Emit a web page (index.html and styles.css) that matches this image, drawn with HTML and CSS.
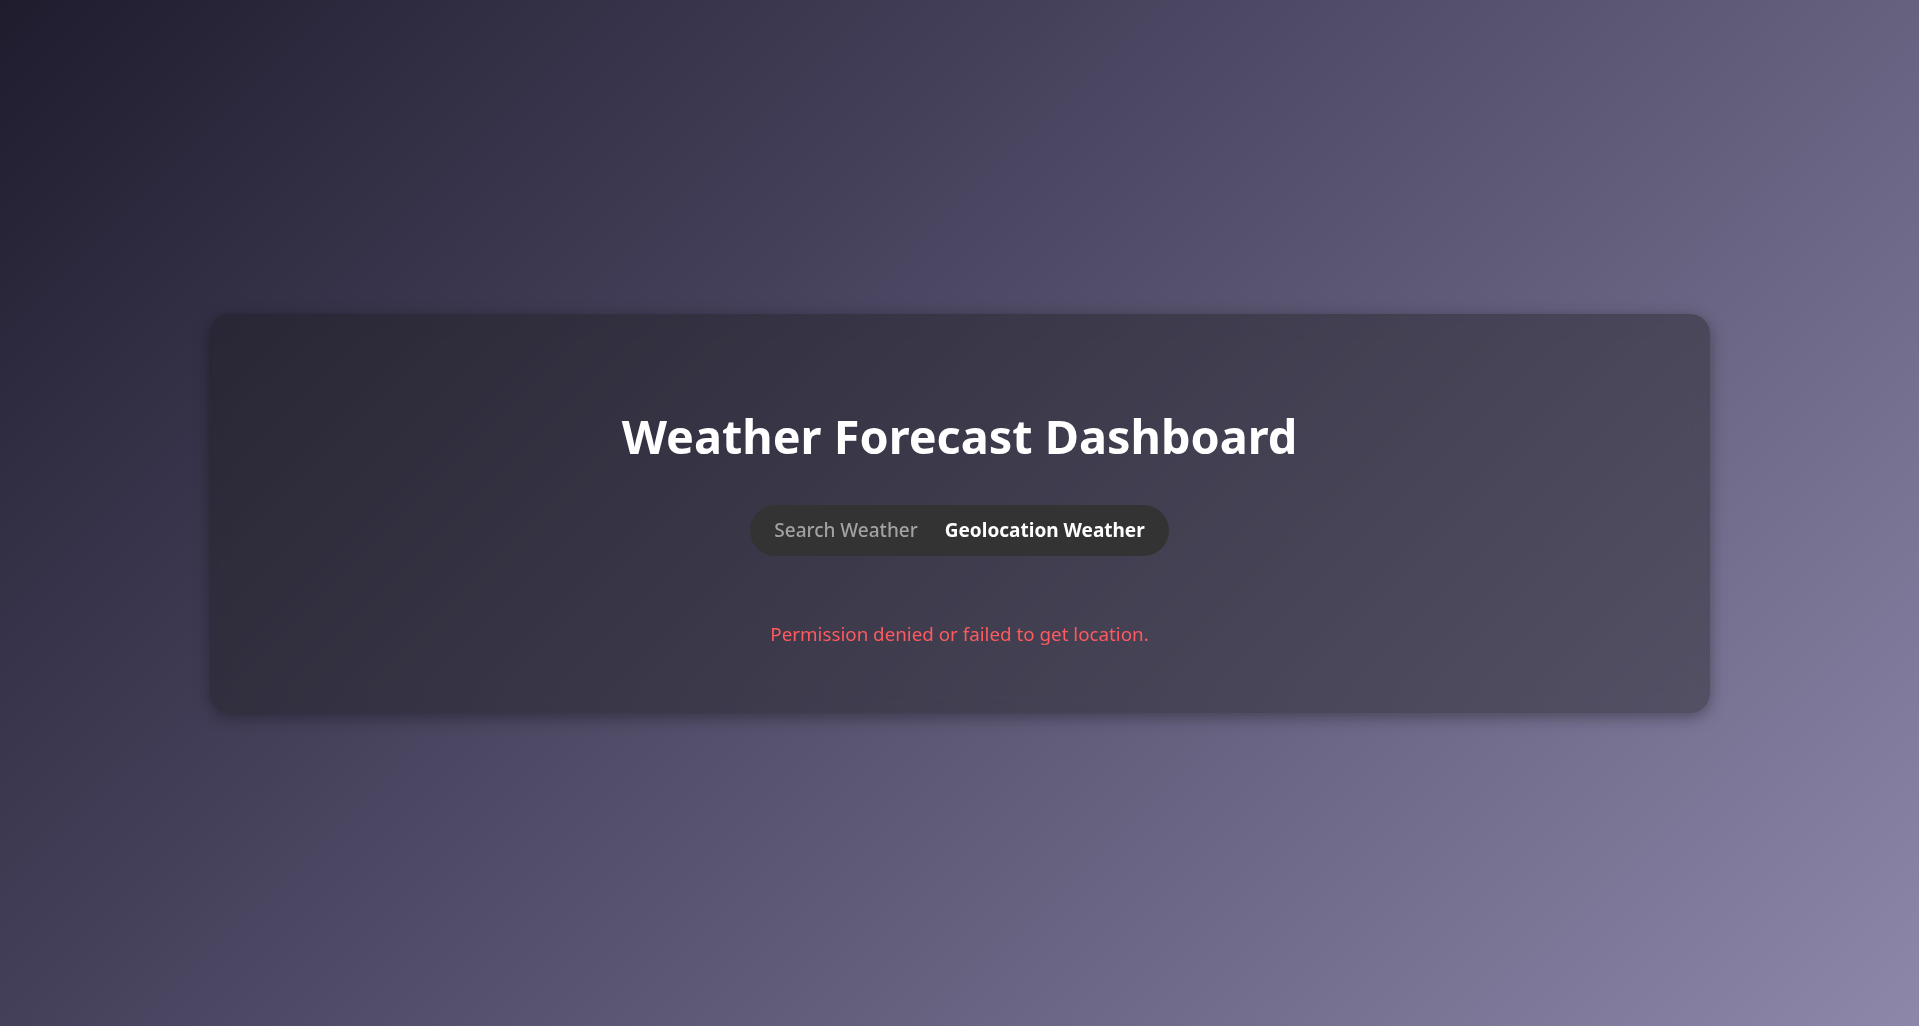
FILE: index.html
```html
<!DOCTYPE html>
<html lang="en">
<head>
<meta charset="utf-8">
<title>Weather Forecast Dashboard</title>
<link rel="stylesheet" href="styles.css">
</head>
<body>
<main class="card">
  <h1 class="title">Weather Forecast Dashboard</h1>
  <nav class="tabs">
    <button class="tab">Search Weather</button>
    <button class="tab tab-active">Geolocation Weather</button>
  </nav>
  <p class="error">Permission denied or failed to get location.</p>
</main>
</body>
</html>
```

FILE: styles.css
```css
* { box-sizing: border-box; }
html, body { height: 100%; }
body {
  margin: 0;
  min-height: 100vh;
  display: flex;
  align-items: center;
  justify-content: center;
  font-family: "Noto Sans", "Open Sans", sans-serif;
  background: linear-gradient(135deg, #1f1c2e 0%, #4a4560 40%, #8d88aa 100%);
  color: #fff;
}
.card {
  width: 1500px;
  height: 399px;
  border-radius: 20px;
  background: rgba(28, 28, 30, 0.4);
  box-shadow: 0 4px 16px rgba(0, 0, 0, 0.35);
  backdrop-filter: blur(10px);
  display: flex;
  flex-direction: column;
  align-items: center;
  padding-top: 94px;
}
.title {
  margin: 0;
  font-size: 46.8px;
  font-weight: 700;
  line-height: 1.2;
}
.tabs {
  margin-top: 41px;
  display: flex;
  gap: 3px;
  height: 51px;
  padding: 0 12px;
  align-items: center;
  background: #333333;
  border-radius: 26px;
}
.tab {
  background: none;
  border: 0;
  font-family: inherit;
  font-size: 19px;
  font-weight: 500;
  color: #a2a2a2;
  padding: 0 12px;
  cursor: pointer;
}
.tab-active {
  color: #fff;
  font-weight: 700;
}
.error {
  margin: 65px 0 0;
  font-size: 18.8px;
  color: #ff5a5f;
}
```
